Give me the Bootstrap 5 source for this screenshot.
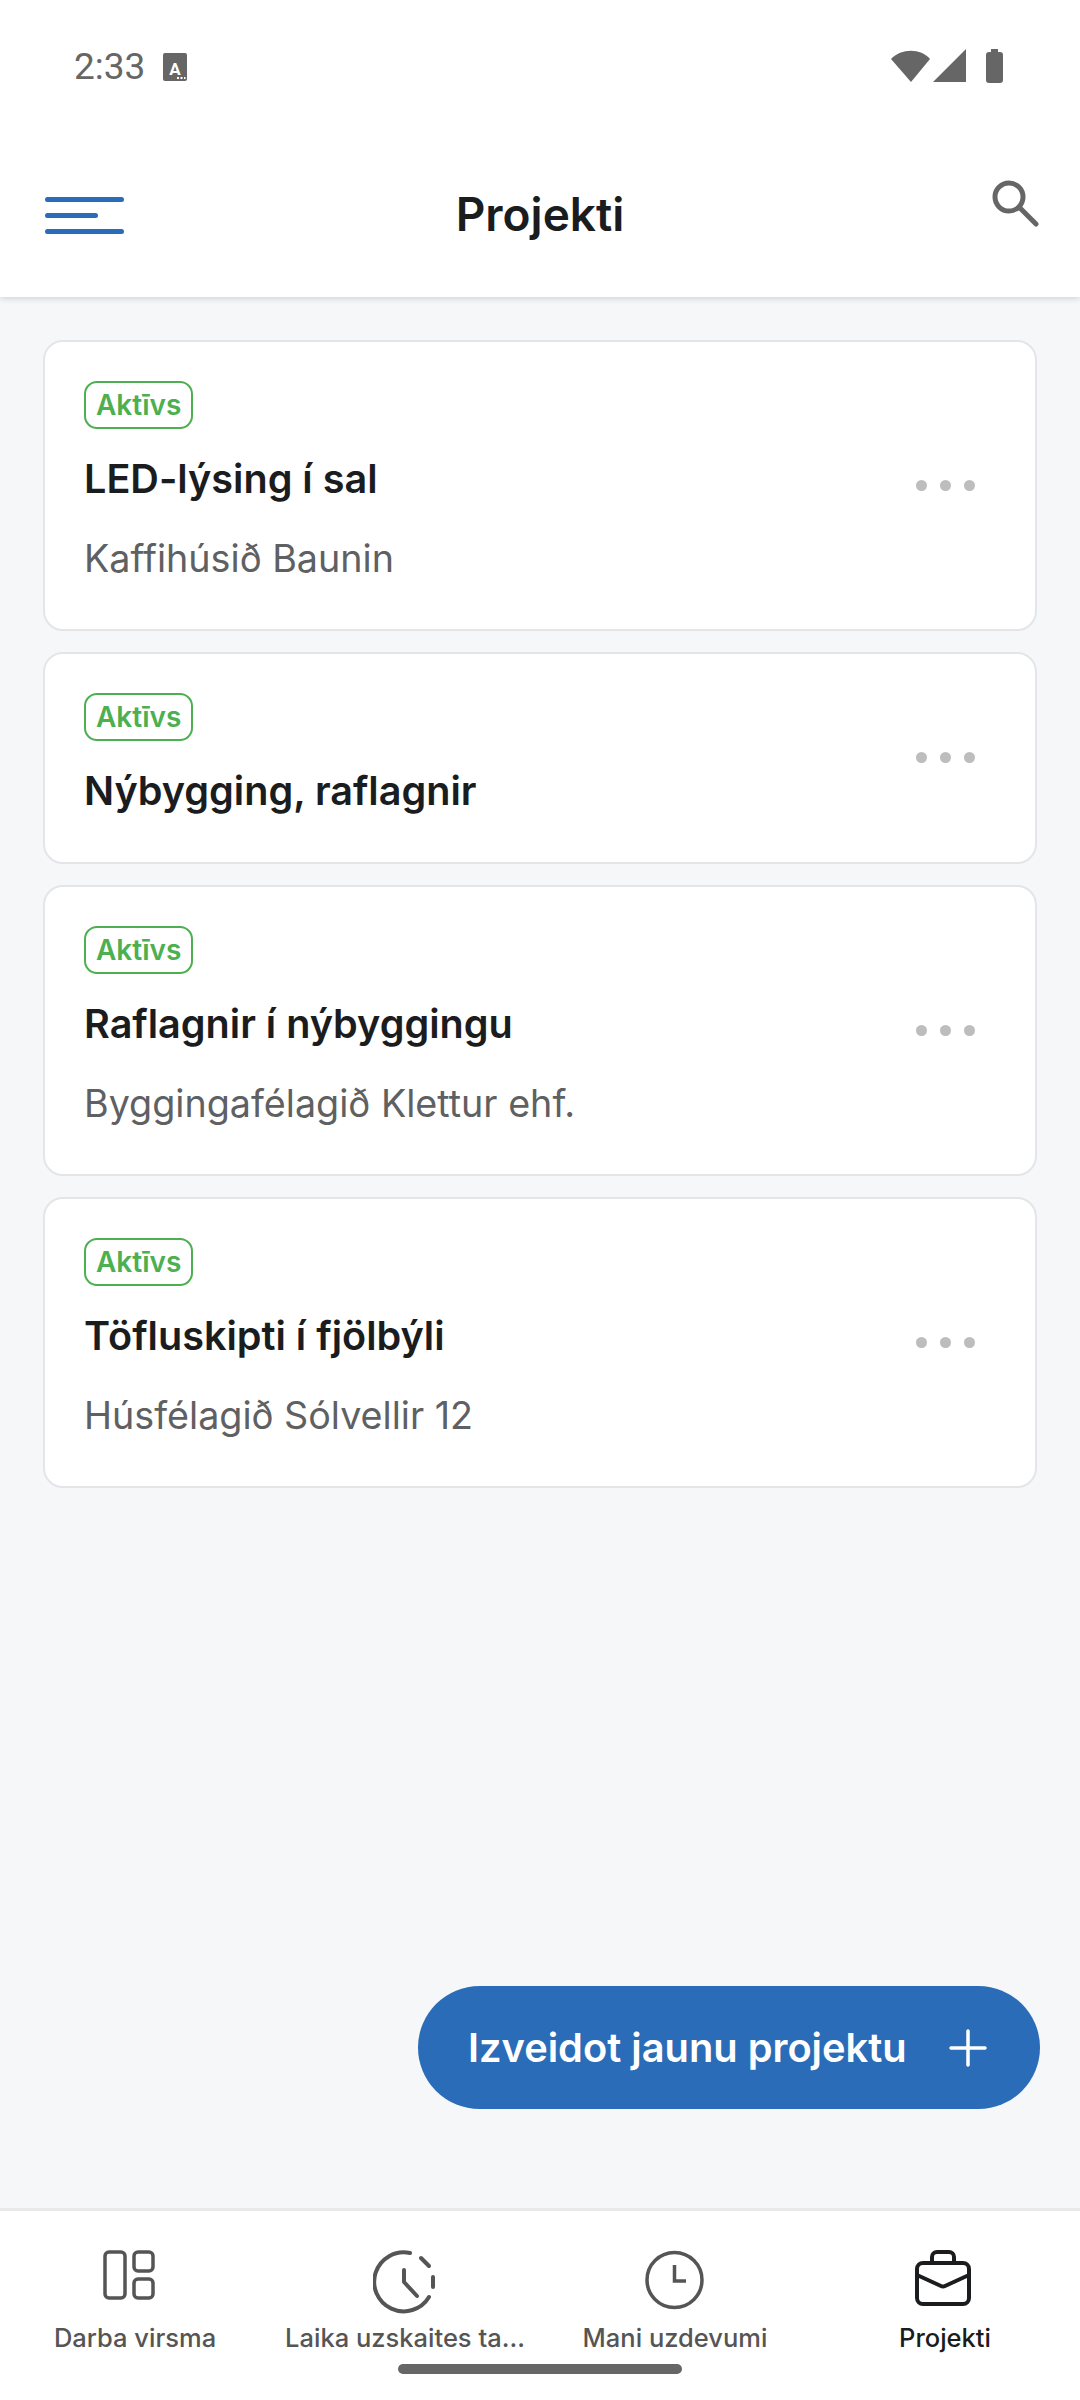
<!DOCTYPE html>
<html lang="lv">
<head>
    <meta charset="UTF-8">
    <meta name="viewport" content="width=device-width, initial-scale=1.0">
    <title>Projekti</title>
    <link href="https://cdn.jsdelivr.net/npm/bootstrap@5.3.0/dist/css/bootstrap.min.css" rel="stylesheet">
    <style>
        body { font-family: Inter, "Noto Sans", sans-serif; background: #f6f7f9; color: #1a1c1e; }
        .app-top { background: #fff; height: 297px; box-shadow: 0 2px 6px rgba(0,0,0,.14); z-index: 2; }
        .status-row { height: 130px; padding: 47px 75px 0 74px; color: #666; }
        .status-icons { margin-top: 2px; }
        .status-time { font-family: Roboto, sans-serif; font-size: 37px; line-height: 40px; margin-right: 18px; }
        .title-row { height: 167px; padding: 0 41px 0 45px; }
        .hamburger { margin-top: 3px; }
        .page-title { font-size: 46px; font-weight: 600; line-height: 56px; margin: 0; }
        .search-btn { margin-top: -22px; }
        .project-list { padding: 43px 43px 0; gap: 21px; }
        .project-item { border: 2.5px solid #e4e5e8; border-radius: 20px; background: #fff; padding: 38.5px 39px 0 39px; }
        .project-tall { height: 291px; }
        .project-short { height: 212px; }
        .status-pill { display: inline-block; height: 48px; line-height: 44px; padding: 0 10px; font-size: 28px; font-weight: 600; color: #4caf50; border: 2.5px solid #4caf50; border-radius: 13px; }
        .project-name { font-size: 39.6px; font-weight: 600; line-height: 48px; margin: 26px 0 0; }
        .project-client { font-size: 37.7px; line-height: 46px; color: #5f6062; margin: 32px 0 0; }
        .dots { position: absolute; right: 60px; top: 50%; gap: 13px; margin-top: -6px; }
        .dots i { display: block; width: 11px; height: 11px; border-radius: 50%; background: #bdbdbd; }
        .new-btn { position: absolute; left: 418px; top: 1986px; width: 622px; height: 123px; border-radius: 62px; background: #2b6cb8; color: #fff; border: 0; font-size: 39.8px; font-weight: 600; padding: 0 53px 0 50px; z-index: 3; }
        .bottom-bar { height: 192px; background: #fff; border-top: 3px solid #e8e9eb; }
        .tab-item { width: 270px; height: 189px; padding-top: 38px; color: #555; font-size: 25.5px; font-weight: 500; }
        .tab-item.active { color: #1a1c1e; }
        .tab-icon { height: 66px; }
        .tab-label { line-height: 32px; margin-top: 7px; max-width: 250px; white-space: nowrap; }
        .home-line { position: absolute; left: 398px; bottom: 26px; width: 284px; height: 10px; border-radius: 5px; background: #666; }
    </style>
</head>
<body class="vh-100 d-flex flex-column position-relative overflow-hidden">

    <!-- Statusa josla un virsraksts -->
    <header class="app-top position-relative">
        <div class="status-row d-flex justify-content-between align-items-start">
            <div class="d-flex align-items-center">
                <span class="status-time">2:33</span>
                <svg width="24" height="28" viewBox="0 0 24 28"><rect width="24" height="28" rx="2" fill="#666"/><text x="12" y="22" text-anchor="middle" font-family="Roboto, sans-serif" font-size="17" font-weight="700" fill="#fff">A</text><path d="M14 25h2M17.500 25h2M21 25h1.500" stroke="#fff" stroke-width="2"/></svg>
            </div>
            <svg class="status-icons" width="114" height="36" viewBox="0 0 114 36" fill="#666">
                <path d="M0 10 C10 -1 30 -1 39 10 L20 33Z"/>
                <path d="M75 0 V33 H42Z"/>
                <path d="M100 3 h2 v-3 h7 v3 h2 a3 3 0 0 1 3 3 v25 a3 3 0 0 1 -3 3 h-11 a3 3 0 0 1 -3 -3 v-25 a3 3 0 0 1 3 -3Z" transform="translate(-2 0)"/>
            </svg>
        </div>
        <div class="title-row d-flex justify-content-between align-items-center position-relative">
            <svg class="hamburger" width="79" height="37" viewBox="0 0 79 37" fill="#2b6cb8"><rect width="79" height="5" rx="2.500"/><rect y="16" width="53" height="5" rx="2.500"/><rect y="32" width="79" height="5" rx="2.500"/></svg>
            <h1 class="page-title position-absolute top-50 start-50 translate-middle">Projekti</h1>
            <svg class="search-btn" width="48" height="48" viewBox="0 0 48 48" fill="none" stroke="#666" stroke-width="5"><circle cx="18" cy="18" r="14"/><path d="M28 28 L45 45" stroke-linecap="round"/></svg>
        </div>
    </header>

    <!-- Projektu saraksts -->
    <main class="project-list flex-grow-1 d-flex flex-column">
        <div class="project-item project-tall position-relative">
            <span class="status-pill">Aktīvs</span>
            <p class="project-name">LED-lýsing í sal</p>
            <p class="project-client">Kaffihúsið Baunin</p>
            <div class="dots d-flex"><i></i><i></i><i></i></div>
        </div>
        <div class="project-item project-short position-relative">
            <span class="status-pill">Aktīvs</span>
            <p class="project-name">Nýbygging, raflagnir</p>
            <div class="dots d-flex"><i></i><i></i><i></i></div>
        </div>
        <div class="project-item project-tall position-relative">
            <span class="status-pill">Aktīvs</span>
            <p class="project-name">Raflagnir í nýbyggingu</p>
            <p class="project-client">Byggingafélagið Klettur ehf.</p>
            <div class="dots d-flex"><i></i><i></i><i></i></div>
        </div>
        <div class="project-item project-tall position-relative">
            <span class="status-pill">Aktīvs</span>
            <p class="project-name">Töfluskipti í fjölbýli</p>
            <p class="project-client">Húsfélagið Sólvellir 12</p>
            <div class="dots d-flex"><i></i><i></i><i></i></div>
        </div>
    </main>

    <button class="new-btn d-flex justify-content-between align-items-center" type="button">
        <span>Izveidot jaunu projektu</span>
        <svg width="38" height="38" viewBox="0 0 38 38" stroke="#fff" stroke-width="3.500" stroke-linecap="round"><path d="M19 2V36M2 19H36"/></svg>
    </button>

    <!-- Apakšējā navigācija -->
    <nav class="bottom-bar d-flex">
        <div class="tab-item d-flex flex-column align-items-center">
            <svg class="tab-icon" width="66" height="66" viewBox="0 0 66 66" fill="none" stroke="#555" stroke-width="3.500"><rect x="3" y="3" width="20" height="46" rx="4"/><rect x="32" y="3" width="19" height="19" rx="4"/><rect x="32" y="30" width="19" height="19" rx="4"/></svg>
            <span class="tab-label">Darba virsma</span>
        </div>
        <div class="tab-item d-flex flex-column align-items-center">
            <svg class="tab-icon" width="64" height="66" viewBox="0 0 64 66" fill="none" stroke="#555" stroke-width="4" stroke-linecap="round" stroke-linejoin="round"><path d="M37 4 A29.500 29.500 0 1 0 56 48"/><path d="M48 9 L56 17"/><path d="M60 28 V38"/><path d="M31 21 V33 L44 47"/></svg>
            <span class="tab-label">Laika uzskaites ta...</span>
        </div>
        <div class="tab-item d-flex flex-column align-items-center">
            <svg class="tab-icon" width="62" height="66" viewBox="0 0 62 66" fill="none" stroke="#555" stroke-width="3.500"><circle cx="30.500" cy="31" r="27.500"/><path d="M30.500 16 V32 H42"/></svg>
            <span class="tab-label">Mani uzdevumi</span>
        </div>
        <div class="tab-item active d-flex flex-column align-items-center">
            <svg class="tab-icon" width="66" height="66" viewBox="0 0 66 66" fill="none" stroke="#1a1c1e" stroke-width="4" stroke-linejoin="round"><rect x="5" y="14" width="52" height="41" rx="6"/><path d="M20 14 V8 a5 5 0 0 1 5 -5 h12 a5 5 0 0 1 5 5 V14"/><path d="M5 26 L29 37 Q31 38 33 37 L57 26"/></svg>
            <span class="tab-label">Projekti</span>
        </div>
    </nav>
    <div class="home-line"></div>

    <script src="https://cdn.jsdelivr.net/npm/bootstrap@5.3.0/dist/js/bootstrap.bundle.min.js"></script>
</body>
</html>
